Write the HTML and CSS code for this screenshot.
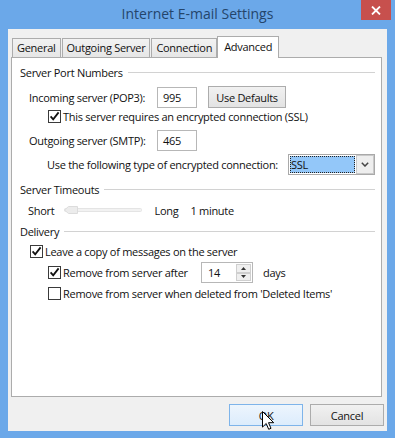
FILE: index.html
```html
<!DOCTYPE html>
<html lang="en">
<head>
    <meta charset="UTF-8">
    <title>Internet E-mail Settings</title>
    <link rel="stylesheet" href="styles.css">
</head>
<body>
    <div class="window">
        <div class="titlebar">
            <span class="title">Internet E-mail Settings</span>
            <button class="close-btn" title="Close">
                <svg width="10" height="9" viewBox="0 0 10 9"><path d="M1 0.5l8 8M9 0.5l-8 8" stroke="#fff" stroke-width="1.8"/></svg>
            </button>
        </div>

        <div class="client">
            <div class="tabs">
                <div class="tab">General</div>
                <div class="tab">Outgoing Server</div>
                <div class="tab">Connection</div>
                <div class="tab active">Advanced</div>
            </div>

            <div class="panel">
                <div class="group-title">Server Port Numbers</div>

                <div class="field-row gap-6">
                    <span class="field-label">Incoming server (POP3):</span>
                    <div class="textbox">995</div>
                    <button class="btn btn-defaults">Use Defaults</button>
                </div>

                <div class="check-row">
                    <span class="checkbox checked"><svg width="11" height="11" viewBox="0 0 11 11"><path d="M1.6 5.4l2.6 3 5.4-7" fill="none" stroke="#111" stroke-width="1.8"/></svg></span>
                    <span>This server requires an encrypted connection (SSL)</span>
                </div>

                <div class="field-row gap-4">
                    <span class="field-label">Outgoing server (SMTP):</span>
                    <div class="textbox">465</div>
                </div>

                <div class="combo-row">
                    <span>Use the following type of encrypted connection:</span>
                    <div class="combo">
                        <div class="combo-value">SSL</div>
                        <div class="combo-arrow">
                            <svg width="8" height="5" viewBox="0 0 8 5"><path d="M0.8 0.8l3.2 3.2 3.2-3.2" fill="none" stroke="#444" stroke-width="1.5"/></svg>
                        </div>
                    </div>
                </div>

                <div class="group-title gap-6">Server Timeouts</div>

                <div class="slider-row">
                    <span>Short</span>
                    <svg class="slider" width="78" height="10" viewBox="0 0 78 10">
                        <rect x="0.5" y="3.5" width="77" height="3" rx="1" fill="#f2f2f2" stroke="#e4e4e4"/>
                        <path d="M0.5 5l4-3.5h9v7h-9z" fill="#ececec" stroke="#dcdcdc"/>
                    </svg>
                    <span class="long">Long</span>
                    <span>1 minute</span>
                </div>

                <div class="group-title gap-5">Delivery</div>

                <div class="check-row top gap-4">
                    <span class="checkbox checked"><svg width="11" height="11" viewBox="0 0 11 11"><path d="M1.6 5.4l2.6 3 5.4-7" fill="none" stroke="#111" stroke-width="1.8"/></svg></span>
                    <span>Leave a copy of messages on the server</span>
                </div>

                <div class="spin-row">
                    <div class="check">
                        <span class="checkbox checked"><svg width="11" height="11" viewBox="0 0 11 11"><path d="M1.6 5.4l2.6 3 5.4-7" fill="none" stroke="#111" stroke-width="1.8"/></svg></span>
                        <span>Remove from server after</span>
                    </div>
                    <div class="spinner">
                        <span class="spin-value">14</span>
                        <div class="spin-buttons">
                            <span><svg width="5" height="3" viewBox="0 0 5 3"><path d="M0 3h5L2.5 0z" fill="#333"/></svg></span>
                            <span><svg width="5" height="3" viewBox="0 0 5 3"><path d="M0 0h5L2.5 3z" fill="#333"/></svg></span>
                        </div>
                    </div>
                    <span class="days">days</span>
                </div>

                <div class="check-row gap-2">
                    <span class="checkbox"></span>
                    <span>Remove from server when deleted from 'Deleted Items'</span>
                </div>
            </div>

            <div class="actions">
                <button class="btn hover">OK
                    <svg class="cursor" width="12" height="20" viewBox="0 0 12 20"><path d="M0.5 0.5v15.6l3.7-3.6 2.5 5.8 2.3-1-2.5-5.6h5.2z" fill="#fff" stroke="#000" stroke-width="1"/></svg>
                </button>
                <button class="btn">Cancel</button>
            </div>
        </div>
    </div>
</body>
</html>
```

FILE: styles.css
```css
:root {
    --frame: #6ba8e9;
    --face: #f0f0f0;
    --edge: #acacac;
    --field-edge: #b7b7b7;
    --text: #111;
}

body {
    margin: 0;
    font-family: "Open Sans", "Noto Sans", sans-serif;
    font-size: 11px;
    letter-spacing: -0.28px;
    color: var(--text);
}

.window {
    width: 395px;
    height: 438px;
    background: var(--frame);
    display: flex;
    flex-direction: column;
}

.titlebar {
    height: 29px;
    display: grid;
    grid-template-columns: 1fr auto 1fr;
    align-items: start;
}

.title {
    grid-column: 2;
    font-size: 14px;
    letter-spacing: 0;
    line-height: 28px;
    color: #24456b;
}

.close-btn {
    grid-column: 3;
    justify-self: end;
    margin-right: 4px;
    width: 30px;
    height: 20px;
    padding: 0;
    border: none;
    background: #c7504d;
    display: flex;
    align-items: center;
    justify-content: center;
}

.client {
    margin: 0 8px;
    height: 402px;
    background: var(--face);
    display: flex;
    flex-direction: column;
}

/* tab strip */
.tabs {
    display: flex;
    align-items: flex-end;
    height: 21px;
    margin: 7px 0 0 4px;
}

.tab {
    box-sizing: border-box;
    height: 19px;
    line-height: 18px;
    padding: 0 4px;
    margin-right: 1px;
    border: 1px solid var(--edge);
    border-bottom: none;
    background: linear-gradient(#f2f2f2, #e6e6e6);
}

.tab.active {
    height: 22px;
    line-height: 20px;
    padding: 0 6px;
    margin: 0 -2px -1px -1px;
    background: #fff;
    position: relative;
    z-index: 1;
}

.panel {
    box-sizing: border-box;
    margin-left: 3px;
    width: 371px;
    height: 340px;
    border: 1px solid var(--edge);
    background: #fff;
    padding: 6px 6px 0 8px;
}

.group-title {
    display: flex;
    align-items: center;
    gap: 5px;
    height: 16px;
}
.group-title::after {
    content: '';
    flex: 1;
    height: 1px;
    background: #d2d2d2;
}

.gap-2 { margin-top: 2px; }
.gap-4 { margin-top: 4px; }
.gap-5 { margin-top: 5px; }
.gap-6 { margin-top: 6px; }

.field-row {
    display: flex;
    align-items: center;
    height: 22px;
    padding-left: 9px;
}

.field-label { width: 128px; }

.textbox {
    box-sizing: border-box;
    width: 40px;
    height: 21px;
    padding-left: 5px;
    border: 1px solid var(--field-edge);
    background: #fff;
    display: flex;
    align-items: center;
}

/* buttons */
.btn {
    box-sizing: border-box;
    width: 74px;
    height: 22px;
    padding: 0;
    border: 1px solid var(--edge);
    background: linear-gradient(#f1f1f1, #e3e3e3);
    font: inherit;
    letter-spacing: inherit;
    color: var(--text);
}
.btn-defaults {
    width: 78px;
    margin-left: 11px;
}
.btn.hover {
    position: relative;
    border-color: #7eb4ea;
    background: linear-gradient(#edf5fd, #dcecfc);
}

.cursor {
    position: absolute;
    left: 32px;
    top: 6px;
}

/* checkboxes */
.check-row, .check {
    display: flex;
    align-items: center;
    gap: 2px;
}
.check-row {
    height: 17px;
    padding-left: 28px;
}
.check-row.top { padding-left: 10px; }

.checkbox {
    box-sizing: border-box;
    width: 13px;
    height: 13px;
    border: 1px solid #3a3a3a;
    background: #fff;
    display: flex;
    align-items: center;
    justify-content: center;
}

/* combo box */
.combo-row {
    display: flex;
    align-items: center;
    height: 22px;
    margin-top: 2px;
    padding-left: 27px;
}
.combo {
    box-sizing: border-box;
    margin-left: auto;
    width: 87px;
    height: 21px;
    border: 1px solid #a9a9a9;
    background: #fff;
    display: flex;
}
.combo-value {
    flex: 1;
    margin: 1px;
    padding-left: 1px;
    background: #93c7f9;
    outline: 1px dotted #222;
    outline-offset: -1px;
    display: flex;
    align-items: center;
}
.combo-arrow {
    width: 16px;
    border: 1px solid #c9c9c9;
    background: #eeeeee;
    display: flex;
    align-items: center;
    justify-content: center;
}

/* trackbar */
.slider-row {
    display: flex;
    align-items: center;
    height: 16px;
    margin-top: 5px;
    padding-left: 8px;
}
.slider { margin: 0 12px 0 10px; }
.long { margin-right: 12px; }

/* spinner */
.spin-row {
    display: flex;
    align-items: center;
    height: 21px;
    margin-top: 2px;
    padding-left: 28px;
}
.spin-row .check { width: 153px; }

.spinner {
    box-sizing: border-box;
    width: 52px;
    height: 21px;
    border: 1px solid var(--field-edge);
    background: #fff;
    display: flex;
}
.spin-value {
    flex: 1;
    padding-left: 6px;
    display: flex;
    align-items: center;
}
.spin-buttons {
    width: 15px;
    margin: 1px;
    display: flex;
    flex-direction: column;
}
.spin-buttons span {
    flex: 1;
    border: 1px solid #cfcfcf;
    background: #efefef;
    display: flex;
    align-items: center;
    justify-content: center;
}

.days { margin-left: 10px; }

.actions {
    display: flex;
    justify-content: flex-end;
    gap: 7px;
    margin: 7px 3px 0 0;
}
```
